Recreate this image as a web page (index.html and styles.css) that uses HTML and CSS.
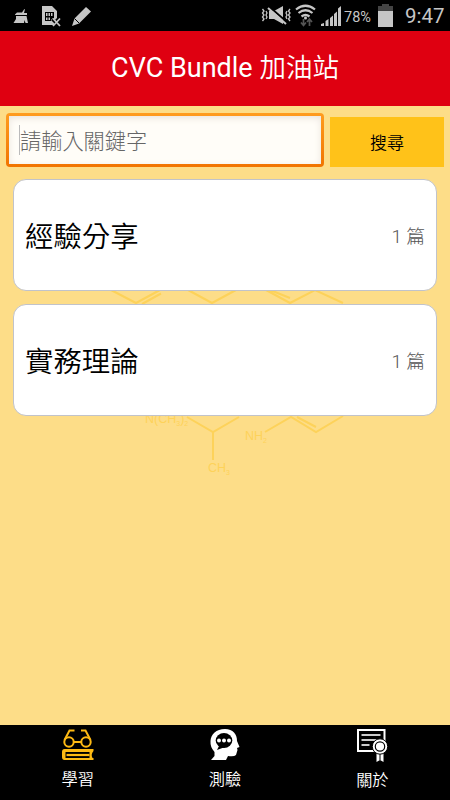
FILE: index.html
```html
<!DOCTYPE html>
<html lang="zh-Hant">
<head>
<meta charset="utf-8">
<title>CVC Bundle 加油站</title>
<link rel="stylesheet" href="styles.css">
</head>
<body>
<div class="app">
  <div class="status">
    <svg class="status-left" width="100" height="31" viewBox="0 0 100 31" fill="#c6c6c6">
      <path d="M15 14.500L17 12.500H22L24 9.500L25 9L24 13H27V15H15zM16 16H26.500L28 23H25.500L24.500 20L24 23H13.500L16 19z"/>
      <path fill-rule="evenodd" d="M42 6H52L57 11V18L55 20L53 18L51 20L54 23V25H42zM45 12V21H51V19H54V12zM46 13H47.500V16H46zM48.500 13H50V16H48.500zM51 13H52.500V16H51zM46 17.500H47.500V20H46zM48.500 17.500H50V20H48.500z"/>
      <path d="M53 18.500L60 26M60 18.500L53 26" stroke="#c6c6c6" stroke-width="1.800"/>
      <path d="M86 7L91 11.500L79 23.500L72 26L74.500 18.500z"/>
      <path d="M74.500 18.500L79 23" stroke="#000" stroke-width="1"/>
    </svg>
    <div class="status-right">
      <svg width="82" height="31" viewBox="260 0 82 31" fill="none" stroke="#c6c6c6">
        <path d="M262.500 9l1.500 2-1.500 2 1.500 2-1.500 2 1.500 2-1.500 2M266 11l1 2-1 2 1 2-1 2M290 9l-1.500 2 1.500 2-1.500 2 1.500 2-1.500 2 1.500 2M287 11l-1 2 1 2-1 2 1 2" stroke-width="1.300"/>
        <path d="M269 11h5l9-5v18l-9-5h-5z" fill="#c6c6c6" stroke="none"/>
        <path d="M269 6.500L288 23" stroke="#000" stroke-width="2"/>
        <path d="M268 8L286 24" stroke-width="2"/>
        <path d="M296 9.500Q305.500 2 315 9.500M298.500 13Q305.500 7.500 312.500 13M301.500 16.500Q305.500 13.500 309.500 16.500" stroke-width="2.200"/>
        <circle cx="305.500" cy="18" r="1.500" fill="#c6c6c6" stroke="none"/>
        <path d="M303.500 19v6M301 22.500l2.500 3 2.500-3M309.500 26v-6M307 22l2.500-3 2.500 3" stroke="#555" stroke-width="1.700"/>
        <path d="M321 26v-2l3-1v3zM325.500 26v-5l3-2v7zM330 26v-8l3-2.500V26zM334 26V14l3-2.500V26zM338 26V8.500l3-2.500V26z" fill="#c6c6c6" stroke="none"/>
      </svg>
      <span class="percent">78%</span>
      <svg class="battery" width="15" height="31" viewBox="0 0 15 31"><path d="M4 4h7v2h4v6H0V6h4z" fill="#444"/><path d="M0 11h15v16H0z" fill="#c6c6c6"/></svg>
      <span class="clock">9:47</span>
    </div>
  </div>
  <header class="header"><h1>CVC Bundle <span class="han">加油站</span></h1></header>
  <main class="main">
    <svg class="molecule" width="250" height="200" viewBox="105 280 250 200" fill="none" stroke="#fdd25a" stroke-width="2">
      <path d="M111 290L136 303L160 290M142 304L161 293.500M188 290L212 303L236 290M266 290L290 303L315 290L343 303M270 290L290 298"/>
      <path d="M187 417L213 432L239 417M213 432V460M265 432L291 417L316 432L343 416M297 417L316 427"/>
      <g fill="#fdd25a" stroke="none" font-size="12.5">
        <text x="145" y="423">N(CH<tspan font-size="7" dy="3">3</tspan><tspan dy="-3">)</tspan><tspan font-size="7" dy="3">2</tspan></text>
        <text x="245" y="440">NH<tspan font-size="7" dy="3">2</tspan></text>
        <text x="208" y="472">CH<tspan font-size="7" dy="3">3</tspan></text>
      </g>
    </svg>
    <div class="search">
      <div class="field"><div class="field-inner"><span class="caret"></span><span class="placeholder">請輸入關鍵字</span></div></div>
      <button class="search-btn">搜尋</button>
    </div>
    <section class="list">
      <div class="card"><span class="card-title">經驗分享</span><span class="count">1 篇</span></div>
      <div class="card"><span class="card-title">實務理論</span><span class="count">1 篇</span></div>
    </section>
  </main>
  <nav class="tabs">
    <div class="tab">
      <svg width="34" height="34" viewBox="60.500 728 34 34" fill="none" stroke="#fdb913" stroke-width="2">
        <circle cx="68.500" cy="742" r="4.700"/><circle cx="85.500" cy="742" r="4.700"/>
        <path d="M73 742h8M64 740L69 730.500H74M90 740L85 730.500H80.500"/>
        <path fill="#fdb913" stroke="none" fill-rule="evenodd" d="M64 749H93V751Q90 754.500 92 758H93V760H64Q61.500 760 61.500 757V752Q61.500 749 64 749zM65 752V758H89V752z"/>
        <path d="M66 755H89" stroke-width="2.200"/>
      </svg>
      <span>學習</span>
    </div>
    <div class="tab">
      <svg width="34" height="34" viewBox="208 728 34 34">
        <path fill="#fff" d="M225 729C233 729 237 734 237 741L239.500 747L237 748L237.500 750L236 755Q234 757 228 756L226 760H211L214.500 756V752Q210 747 210.500 741C211 734 216 729 225 729z"/>
        <ellipse cx="224" cy="740.500" rx="8.300" ry="7.500"/>
        <path d="M219 746L217 750L225 747z"/>
        <g fill="#fff"><circle cx="219" cy="740.500" r="2"/><circle cx="224" cy="740.500" r="2"/><circle cx="229" cy="740.500" r="2"/></g>
      </svg>
      <span>測驗</span>
    </div>
    <div class="tab">
      <svg width="34" height="34" viewBox="355.500 728 34 34" fill="none" stroke="#fff" stroke-width="2">
        <path d="M358.500 730H385V751H358.500z"/>
        <path d="M362 735H381M362 740H379M362 745H370" stroke="#ccc"/>
        <path d="M377 749H384V762L380.500 760L377 762z" fill="#fff" stroke="none"/>
        <path d="M380.500 754V760" stroke="#000" stroke-width="1"/>
        <circle cx="380.500" cy="746.500" r="7.700" fill="#fff" stroke="#000" stroke-width="1"/>
        <circle cx="380.500" cy="746.500" r="4.700" fill="#fff" stroke="#000" stroke-width="1.200"/>
      </svg>
      <span class="lower">關於</span>
    </div>
  </nav>
</div>
</body>
</html>
```
FILE: styles.css
```css
* { box-sizing: border-box; }
body { margin: 0; font-family: Roboto, "Noto Sans CJK TC", sans-serif; }
.app { width: 450px; height: 800px; display: flex; flex-direction: column; background: #fddd88; }
.status { height: 31px; flex: none; background: #000; color: #c6c6c6; display: flex; justify-content: space-between; }
.status-right { display: flex; align-items: center; padding-right: 6px; }
.percent { width: 30px; margin-left: 2px; font-size: 14.5px; line-height: 31px; padding-top: 3px; }
.battery { margin-left: 4px; }
.clock { width: 39px; margin-left: 12px; font-size: 20.5px; line-height: 31px; padding-top: 2px; white-space: nowrap; }
.header { height: 75px; flex: none; background: #df0011; color: #fff; display: flex; align-items: center; justify-content: center; }
.header h1 { margin: 0; font-size: 27px; line-height: 38px; font-weight: 400; padding-bottom: 2px; white-space: nowrap; }
.han { font-weight: 350; font-size: 26.5px; }
.main { position: relative; flex: 1; padding: 7px 6px 0; }
.molecule { position: absolute; left: 105px; top: 174px; font-family: "Liberation Sans", sans-serif; }
.search { position: relative; display: flex; align-items: flex-end; gap: 6px; height: 54px; }
.field { width: 318px; height: 54px; padding: 3px; border-radius: 4px; background: linear-gradient(#ff9c1f, #f17400); }
.field-inner { height: 48px; display: flex; align-items: center; padding-left: 10px; background: #fffdf8; box-shadow: inset 0 2px 7px #e9e4dc; color: #666; font-size: 21.2px; font-weight: 300; }
.placeholder { padding-bottom: 2px; }
.caret { width: 1px; height: 30px; background: #bbb; }
.search-btn { width: 114px; height: 50px; border: 0; padding: 0 0 2px; background: #ffc219; color: #000; font: 350 17px Roboto, "Noto Sans CJK TC", sans-serif; }
.list { position: relative; display: flex; flex-direction: column; gap: 13px; padding: 12px 7px 0; }
.card { height: 112px; border: 1px solid #c1c3ca; border-radius: 13px; background: #fff; display: flex; align-items: center; justify-content: space-between; padding: 0 11px; }
.card-title { color: #000; font-size: 28.4px; font-weight: 350; padding-bottom: 2px; }
.count { color: #555; font-size: 18.7px; font-weight: 300; padding-bottom: 2px; }
.tabs { height: 75px; flex: none; background: #000; color: #fff; display: flex; padding: 3px 4px 0; }
.tab { flex: 1; display: flex; flex-direction: column; align-items: center; font-size: 16.2px; font-weight: 350; line-height: 35px; }
.tab svg { flex: none; }
.lower { padding-top: 1px; }
```
